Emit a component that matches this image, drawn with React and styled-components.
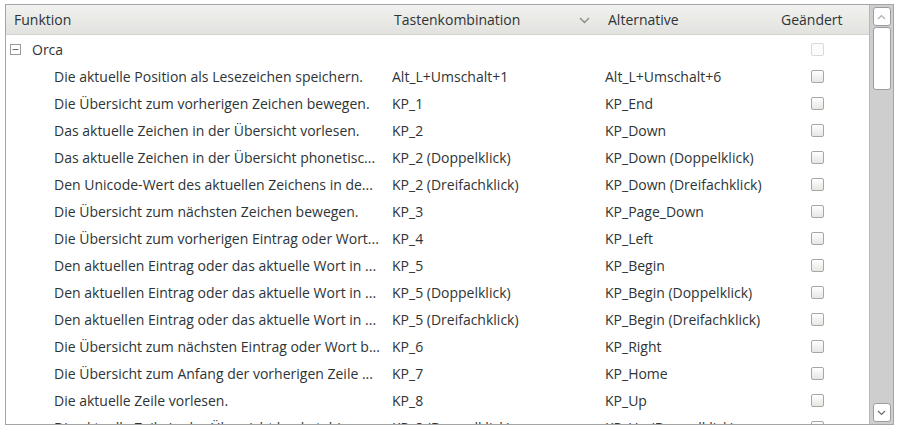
import React from 'react';
import styled, { createGlobalStyle } from 'styled-components';

const GlobalStyle = createGlobalStyle`
    html, body {
        margin: 0;
        padding: 0;
        background: #ffffff;
    }
    body {
        font-family: "Open Sans", "DejaVu Sans", sans-serif;
        font-size: 14px;
        color: #2e3436;
    }
`;

const rows = [
    ['Die aktuelle Position als Lesezeichen speichern.', 'Alt_L+Umschalt+1', 'Alt_L+Umschalt+6'],
    ['Die Übersicht zum vorherigen Zeichen bewegen.', 'KP_1', 'KP_End'],
    ['Das aktuelle Zeichen in der Übersicht vorlesen.', 'KP_2', 'KP_Down'],
    ['Das aktuelle Zeichen in der Übersicht phonetisc...', 'KP_2 (Doppelklick)', 'KP_Down (Doppelklick)'],
    ['Den Unicode-Wert des aktuellen Zeichens in de...', 'KP_2 (Dreifachklick)', 'KP_Down (Dreifachklick)'],
    ['Die Übersicht zum nächsten Zeichen bewegen.', 'KP_3', 'KP_Page_Down'],
    ['Die Übersicht zum vorherigen Eintrag oder Wort...', 'KP_4', 'KP_Left'],
    ['Den aktuellen Eintrag oder das aktuelle Wort in ...', 'KP_5', 'KP_Begin'],
    ['Den aktuellen Eintrag oder das aktuelle Wort in ...', 'KP_5 (Doppelklick)', 'KP_Begin (Doppelklick)'],
    ['Den aktuellen Eintrag oder das aktuelle Wort in ...', 'KP_5 (Dreifachklick)', 'KP_Begin (Dreifachklick)'],
    ['Die Übersicht zum nächsten Eintrag oder Wort b...', 'KP_6', 'KP_Right'],
    ['Die Übersicht zum Anfang der vorherigen Zeile ...', 'KP_7', 'KP_Home'],
    ['Die aktuelle Zeile vorlesen.', 'KP_8', 'KP_Up'],
    ['Die aktuelle Zeile in der Übersicht buchstabieren.', 'KP_8 (Doppelklick)', 'KP_Up (Doppelklick)'],
];

const COLS = '381px 213px 173px 1fr';

export default function App() {
    return (
        <Page>
            <GlobalStyle />
            <Frame>
                <TreeView>
                    <Header>
                        <HeadCell>Funktion</HeadCell>
                        <HeadCell $sorted>
                            Tastenkombination
                            <svg width="11" height="7" viewBox="0 0 11 7">
                                <path d="M1 1 L5.5 5.5 L10 1" fill="none" stroke="#8a8a8a" strokeWidth="1.4" />
                            </svg>
                        </HeadCell>
                        <HeadCell>Alternative</HeadCell>
                        <HeadCell>Geändert</HeadCell>
                    </Header>
                    <Body>
                        <Row>
                            <Cell>
                                <Expander>
                                    <svg width="11" height="11" viewBox="0 0 11 11">
                                        <rect x="0.5" y="0.5" width="10" height="10" fill="#fff" stroke="#9a9a9a" />
                                        <path d="M2.5 5.5 H8.5" stroke="#6a6a6a" strokeWidth="1" />
                                    </svg>
                                </Expander>
                                Orca
                            </Cell>
                            <Cell />
                            <Cell />
                            <CheckCell>
                                <Check $disabled />
                            </CheckCell>
                        </Row>
                        {rows.map(([label, key, alt], i) => (
                            <Row key={i}>
                                <Cell $indent>
                                    <Label>{label}</Label>
                                </Cell>
                                <Cell>{key}</Cell>
                                <Cell>{alt}</Cell>
                                <CheckCell>
                                    <Check />
                                </CheckCell>
                            </Row>
                        ))}
                    </Body>
                </TreeView>
                <ScrollBar>
                    <ScrollButton>
                        <svg width="9" height="6" viewBox="0 0 9 6">
                            <path d="M1 5 L4.5 1.5 L8 5" fill="none" stroke="#b0b0b0" strokeWidth="1.2" />
                        </svg>
                    </ScrollButton>
                    <Thumb />
                    <Track />
                    <ScrollButton>
                        <svg width="9" height="6" viewBox="0 0 9 6">
                            <path d="M1 1 L4.5 4.5 L8 1" fill="none" stroke="#6a6a6a" strokeWidth="1.2" />
                        </svg>
                    </ScrollButton>
                </ScrollBar>
            </Frame>
        </Page>
    );
}

const Page = styled.div`
    width: 898px;
    height: 429px;
    box-sizing: border-box;
    padding: 4px 4px 4px 5px;
`;

const Frame = styled.div`
    height: 421px;
    box-sizing: border-box;
    border: 1px solid #a5a5a5;
    display: flex;
    overflow: hidden;
`;

const TreeView = styled.div`
    flex: 1;
    display: flex;
    flex-direction: column;
    overflow: hidden;
    background: #ffffff;
`;

const Header = styled.div`
    display: grid;
    grid-template-columns: ${COLS};
    height: 30px;
    box-sizing: border-box;
    flex-shrink: 0;
    background: linear-gradient(#f1f1ef, #e2e2df);
    border-bottom: 1px solid #d3d3d0;
`;

const HeadCell = styled.div`
    display: flex;
    align-items: center;
    justify-content: ${(p) => (p.$sorted ? 'space-between' : 'flex-start')};
    padding: 0 ${(p) => (p.$sorted ? '10px' : '8px')} 0 ${(p) => (p.$sorted ? '7px' : '8px')};
    color: #2e3436;
    white-space: nowrap;

    svg {
        margin-top: 1px;
    }
`;

const Body = styled.div`
    display: flex;
    flex-direction: column;
    padding-top: 1px;
`;

const Row = styled.div`
    display: grid;
    grid-template-columns: ${COLS};
    height: 27px;
    flex-shrink: 0;
    align-items: center;
`;

const Cell = styled.div`
    display: flex;
    align-items: center;
    padding: 0 6px 0 ${(p) => (p.$indent ? '48px' : '5px')};
    white-space: nowrap;
    overflow: hidden;
`;

const Label = styled.span`
    overflow: hidden;
    text-overflow: ellipsis;
`;

const Expander = styled.span`
    display: inline-flex;
    margin: 0 11px 0 -1px;
`;

const CheckCell = styled.div`
    display: flex;
    justify-content: center;
    padding-right: 7px;
`;

const Check = styled.span`
    width: 11px;
    height: 11px;
    border-radius: 2px;
    border: 1px solid ${(p) => (p.$disabled ? '#d8dad6' : '#a3aaa0')};
    background: ${(p) => (p.$disabled ? '#fcfcfc' : 'linear-gradient(#ffffff, #e6e6e4)')};
`;

const ScrollBar = styled.div`
    width: 24px;
    flex-shrink: 0;
    background: #cecece;
    border-left: 1px solid #b8b8b8;
    display: flex;
    flex-direction: column;
    align-items: center;
    padding: 2px 0;
    gap: 1px;
    box-sizing: border-box;
`;

const ScrollButton = styled.div`
    width: 16px;
    height: 17px;
    flex-shrink: 0;
    background: #ffffff;
    border: 1px solid #9d9d9d;
    border-radius: 3px;
    display: flex;
    align-items: center;
    justify-content: center;
`;

const Thumb = styled.div`
    width: 16px;
    height: 61px;
    background: #ffffff;
    border: 1px solid #9d9d9d;
    border-radius: 3px;
`;

const Track = styled.div`
    flex: 1;
`;
